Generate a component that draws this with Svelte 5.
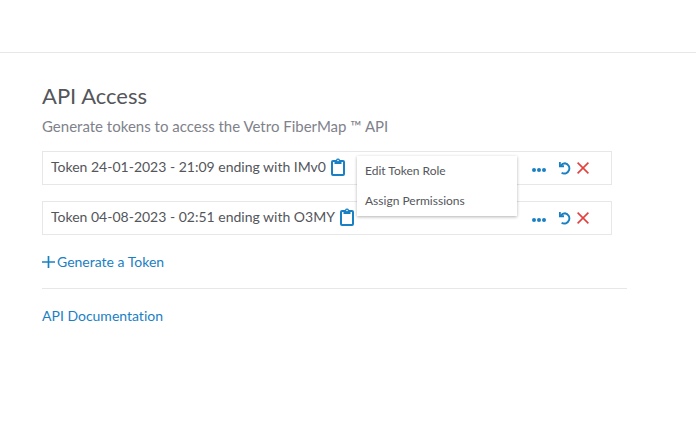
<script lang="ts">
  interface Token {
    id: number;
    label: string;
    suffix: string;
  }

  let tokens: Token[] = $state([
    { id: 1, label: '24-01-2023 - 21:09', suffix: 'IMv0' },
    { id: 2, label: '04-08-2023 - 02:51', suffix: 'O3MY' },
  ]);
  let openMenu: number | null = $state(1);

  function toggleMenu(id: number) {
    openMenu = openMenu === id ? null : id;
  }

  function remove(id: number) {
    tokens = tokens.filter((t) => t.id !== id);
  }

  async function copy(text: string) {
    try {
      await navigator.clipboard.writeText(text);
    } catch {
      // clipboard not available
    }
  }
</script>

<header class="topbar"></header>

<main class="page">
  <section class="access">
    <h1>API Access</h1>
    <p class="intro">Generate tokens to access the Vetro FiberMap ™ API</p>

    <ul class="tokens">
      {#each tokens as token (token.id)}
        <li class="token">
          <span class="name">Token {token.label} ending with {token.suffix}</span>
          <button type="button" class="icon copy" aria-label="Copy token" onclick={() => copy(token.suffix)}>
            <svg width="14" height="18" viewBox="0 0 14 18">
              <rect x="1" y="3" width="12" height="14" rx="1" fill="none" stroke="currentColor" stroke-width="2" />
              <path d="M3.5 2H5A2.1 2.1 0 0 1 9 2H10.5V6H3.5Z" fill="currentColor" />
              <circle cx="7" cy="2.5" r="0.8" fill="#fff" />
            </svg>
          </button>

          <div class="actions">
            <button
              type="button"
              class="icon more"
              aria-label="More actions"
              aria-expanded={openMenu === token.id}
              onclick={() => toggleMenu(token.id)}
            >
              <svg width="14" height="4" viewBox="0 0 14 4" fill="currentColor">
                <circle cx="2" cy="2" r="2" />
                <circle cx="7" cy="2" r="2" />
                <circle cx="12" cy="2" r="2" />
              </svg>
            </button>
            <button type="button" class="icon" aria-label="Regenerate token">
              <svg width="12" height="13" viewBox="0 0 12 13">
                <path
                  d="M1.8 3.6C2.8 2.1 4.3 1.2 6 1.2A5 5.2 0 1 1 2.6 10.7"
                  fill="none"
                  stroke="currentColor"
                  stroke-width="1.9"
                />
                <path d="M0 0H1.8V3.2H5V5.2H0Z" fill="currentColor" />
              </svg>
            </button>
            <button type="button" class="icon danger" aria-label="Delete token" onclick={() => remove(token.id)}>
              <svg width="12" height="12" viewBox="0 0 12 12">
                <path d="M0.6 0.6L11.4 11.4M11.4 0.6L0.6 11.4" fill="none" stroke="currentColor" stroke-width="1.6" />
              </svg>
            </button>

            {#if openMenu === token.id}
              <div class="menu">
                <button type="button">Edit Token Role</button>
                <button type="button">Assign Permissions</button>
              </div>
            {/if}
          </div>
        </li>
      {/each}
    </ul>

    <button type="button" class="generate">
      <svg width="13" height="12" viewBox="0 0 13 12">
        <path d="M6.5 0V12M0 6H13" fill="none" stroke="currentColor" stroke-width="1.7" />
      </svg>
      Generate a Token
    </button>
  </section>

  <a class="docs" href="#docs">API Documentation</a>
</main>

<style>
  :global(body) {
    background: #fff;
    color: #54565b;
    font-family: Lato, sans-serif;
    font-size: 14px;
    font-variant-ligatures: none;
    line-height: 20px;
  }
  .topbar {
    height: 52px;
    border-bottom: 1px solid #e6e7e8;
  }
  .page {
    padding: 29px 69px 30px 42px;
  }
  .access {
    padding-bottom: 16px;
    border-bottom: 1px solid #e6e7e8;
  }
  h1 {
    margin: 0;
    font-size: 22px;
    font-weight: 400;
    line-height: 28px;
  }
  .intro {
    margin: 6px 0 15px;
    color: #7f828b;
    font-size: 15px;
  }
  .tokens {
    display: flex;
    flex-direction: column;
    gap: 16px;
    margin: 0 15px 17px 0;
    padding: 0;
    list-style: none;
  }
  .token {
    display: flex;
    align-items: center;
    height: 32px;
    padding: 0 22px 0 8px;
    border: 1px solid #e6e7e8;
  }
  .name {
    margin-right: 5px;
    padding-bottom: 2px;
    white-space: nowrap;
  }
  button {
    padding: 0;
    border: 0;
    background: none;
    color: #1a80c4;
    font: inherit;
    cursor: pointer;
  }
  .icon {
    display: flex;
  }
  .copy {
    padding-bottom: 2px;
  }
  .danger {
    color: #e5403d;
  }
  .actions {
    position: relative;
    display: flex;
    align-items: center;
    gap: 6px;
    margin-left: auto;
  }
  .more {
    padding: 4px 7px 0 0;
  }
  .menu {
    position: absolute;
    top: -6px;
    right: 72px;
    z-index: 1;
    width: 160px;
    background: #fff;
    box-shadow: 0 1px 3px rgba(0, 0, 0, 0.3);
  }
  .menu button {
    display: block;
    width: 100%;
    padding: 5px 8px;
    color: #54565b;
    font-size: 12px;
    text-align: left;
  }
  .generate {
    display: flex;
    align-items: center;
    gap: 2px;
  }
  .docs {
    display: inline-block;
    margin-top: 17px;
    color: #1a80c4;
    text-decoration: none;
  }
  .docs:hover {
    text-decoration: underline;
  }
</style>
